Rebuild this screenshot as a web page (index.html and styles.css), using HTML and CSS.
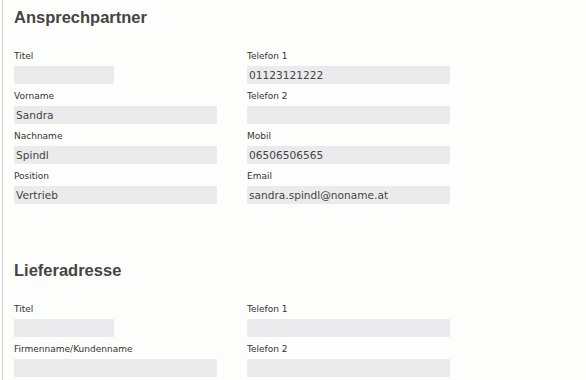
FILE: index.html
```html
<!DOCTYPE html>
<html lang="de">
<head>
    <meta charset="UTF-8">
    <title>Kontakt</title>
    <link rel="stylesheet" href="styles.css">
</head>
<body>
    <div class="page">
        <!-- Ansprechpartner -->
        <div class="section">
            <h2>Ansprechpartner</h2>
            <div class="fields">
                <div class="field">
                    <label>Titel</label>
                    <div class="input short"></div>
                </div>
                <div class="field">
                    <label>Telefon 1</label>
                    <div class="input">01123121222</div>
                </div>
                <div class="field">
                    <label>Vorname</label>
                    <div class="input">Sandra</div>
                </div>
                <div class="field">
                    <label>Telefon 2</label>
                    <div class="input"></div>
                </div>
                <div class="field">
                    <label>Nachname</label>
                    <div class="input">Spindl</div>
                </div>
                <div class="field">
                    <label>Mobil</label>
                    <div class="input">06506506565</div>
                </div>
                <div class="field">
                    <label>Position</label>
                    <div class="input">Vertrieb</div>
                </div>
                <div class="field">
                    <label>Email</label>
                    <div class="input">sandra.spindl@noname.at</div>
                </div>
            </div>
        </div>

        <!-- Lieferadresse -->
        <div class="section">
            <h2>Lieferadresse</h2>
            <div class="fields">
                <div class="field">
                    <label>Titel</label>
                    <div class="input short"></div>
                </div>
                <div class="field">
                    <label>Telefon 1</label>
                    <div class="input"></div>
                </div>
                <div class="field">
                    <label>Firmenname/Kundenname</label>
                    <div class="input"></div>
                </div>
                <div class="field">
                    <label>Telefon 2</label>
                    <div class="input"></div>
                </div>
            </div>
        </div>
    </div>
</body>
</html>
```

FILE: styles.css
```css
html, body {
    margin: 0;
    padding: 0;
    background-color: #fdfdfb;
}
.page {
    margin-left: 2px;
    border-left: 1px solid #cfcfcf;
    padding: 0 0 0 11px;
    min-height: 380px;
}
.section {
    padding-bottom: 49px;
}
h2 {
    font-family: "Liberation Sans", Arial, sans-serif;
    font-size: 16.5px;
    font-weight: bold;
    color: #444;
    margin: 0;
    padding-top: 8px;
    line-height: 19px;
    height: 36px;
}
.fields {
    display: grid;
    grid-template-columns: 203px 203px;
    column-gap: 30px;
}
.field {
    display: flex;
    flex-direction: column;
}
label {
    font-family: "DejaVu Sans", Tahoma, sans-serif;
    font-size: 9px;
    color: #333;
    height: 22px;
    line-height: 12px;
    padding-top: 6px;
    box-sizing: border-box;
}
.input {
    height: 18px;
    background-color: #ebebed;
    font-family: "DejaVu Sans", Tahoma, sans-serif;
    font-size: 10.6px;
    line-height: 18px;
    color: #444;
    padding-left: 2px;
    box-sizing: border-box;
}
.input.short {
    width: 100px;
}
```
